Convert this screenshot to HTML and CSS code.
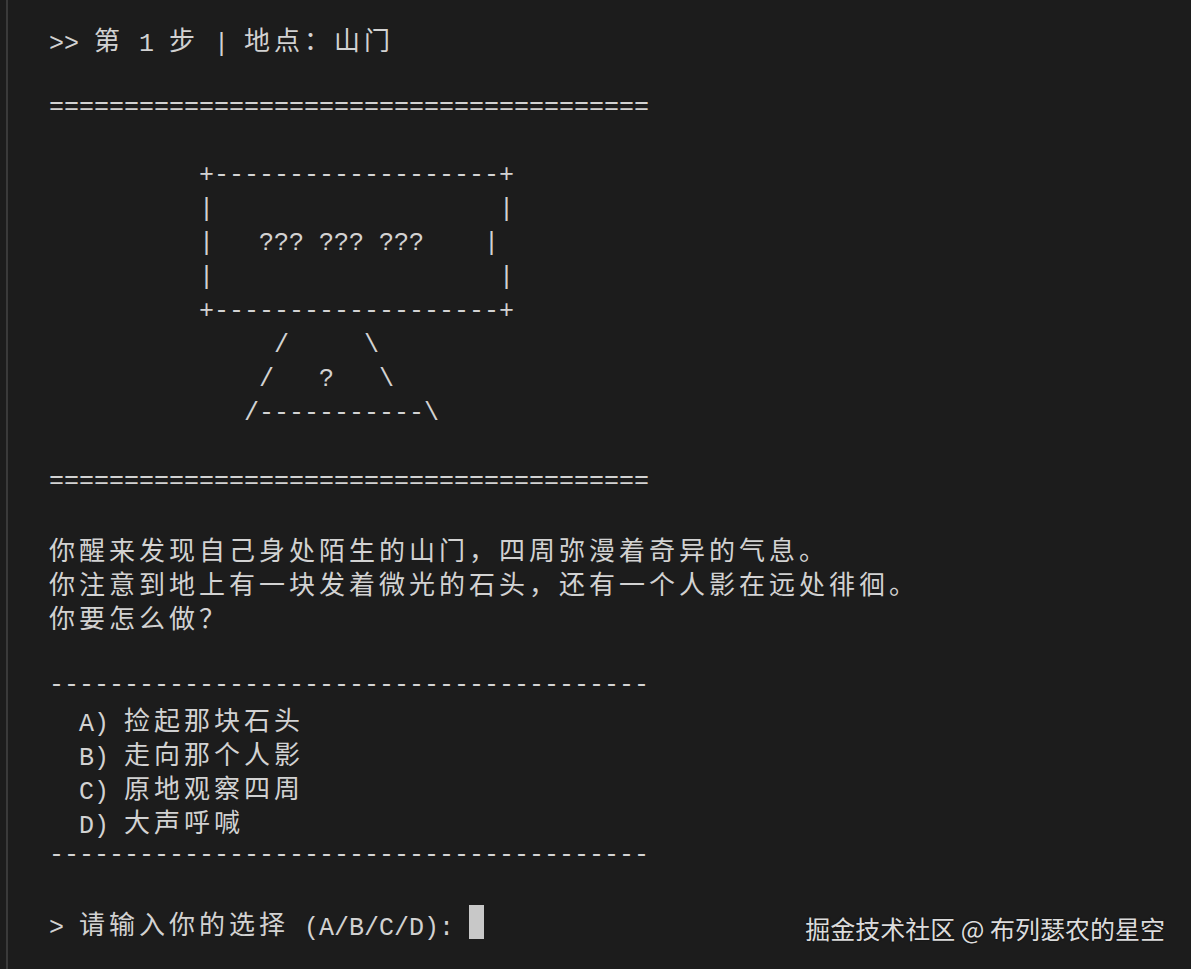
FILE: index.html
```html
<!DOCTYPE html>
<html lang="zh-CN">
<head>
<meta charset="utf-8">
<title>终端</title>
<link rel="stylesheet" href="styles.css">
</head>
<body>
<div class="term">
<div class="screen">
<div class="ln">&gt;&gt; <span class="w">第</span> 1 <span class="w">步</span> | <span class="w">地点：山门</span></div>
<div class="ln"> </div>
<div class="ln">========================================</div>
<div class="ln"> </div>
<div class="ln">          +-------------------+</div>
<div class="ln">          |                   |</div>
<div class="ln">          |   ??? ??? ???    |</div>
<div class="ln">          |                   |</div>
<div class="ln">          +-------------------+</div>
<div class="ln">               /     \</div>
<div class="ln">              /   ?   \</div>
<div class="ln">             /-----------\</div>
<div class="ln"> </div>
<div class="ln">========================================</div>
<div class="ln"> </div>
<div class="ln"><span class="w">你醒来发现自己身处陌生的山门，四周弥漫着奇异的气息。</span></div>
<div class="ln"><span class="w">你注意到地上有一块发着微光的石头，还有一个人影在远处徘徊。</span></div>
<div class="ln"><span class="w">你要怎么做？</span></div>
<div class="ln"> </div>
<div class="ln">----------------------------------------</div>
<div class="ln">  A) <span class="w">捡起那块石头</span></div>
<div class="ln">  B) <span class="w">走向那个人影</span></div>
<div class="ln">  C) <span class="w">原地观察四周</span></div>
<div class="ln">  D) <span class="w">大声呼喊</span></div>
<div class="ln">----------------------------------------</div>
<div class="ln"> </div>
<div class="ln">&gt; <span class="w">请输入你的选择</span> (A/B/C/D): <span class="cursor"> </span></div>
</div>
</div>
<div class="watermark">掘金技术社区 @ 布列瑟农的星空</div>
</body>
</html>
```

FILE: styles.css
```css
html, body {
  margin: 0;
  padding: 0;
  background: #1c1c1c;
  height: 100%;
  overflow: hidden;
}

.term {
  margin-left: 6px;
  border-left: 2px solid #3a3a3a;
  height: 100%;
  box-sizing: border-box;
  padding: 23px 0 0 41px;
}

.screen {
  font-family: "Liberation Mono", "DejaVu Sans Mono", monospace;
  font-size: 25px;
  line-height: 34px;
  color: #d2d2d2;
}

.ln {
  height: 34px;
  white-space: pre;
}

.w {
  position: relative;
  top: -1px;
  font-family: "Noto Sans CJK SC", sans-serif;
  font-size: 26px;
  letter-spacing: 4px;
  line-height: 34px;
}

.cursor {
  display: inline-block;
  width: 15px;
  height: 34px;
  background: #c8c8c8;
  vertical-align: top;
  position: relative;
  top: -2px;
}

.watermark {
  position: absolute;
  right: 26px;
  bottom: 24px;
  font-family: "Noto Sans CJK SC", "Noto Sans", sans-serif;
  font-size: 25px;
  line-height: 34px;
  color: #dcdcdc;
  text-shadow: 0 0 2px rgba(0, 0, 0, 0.6);
}
```
